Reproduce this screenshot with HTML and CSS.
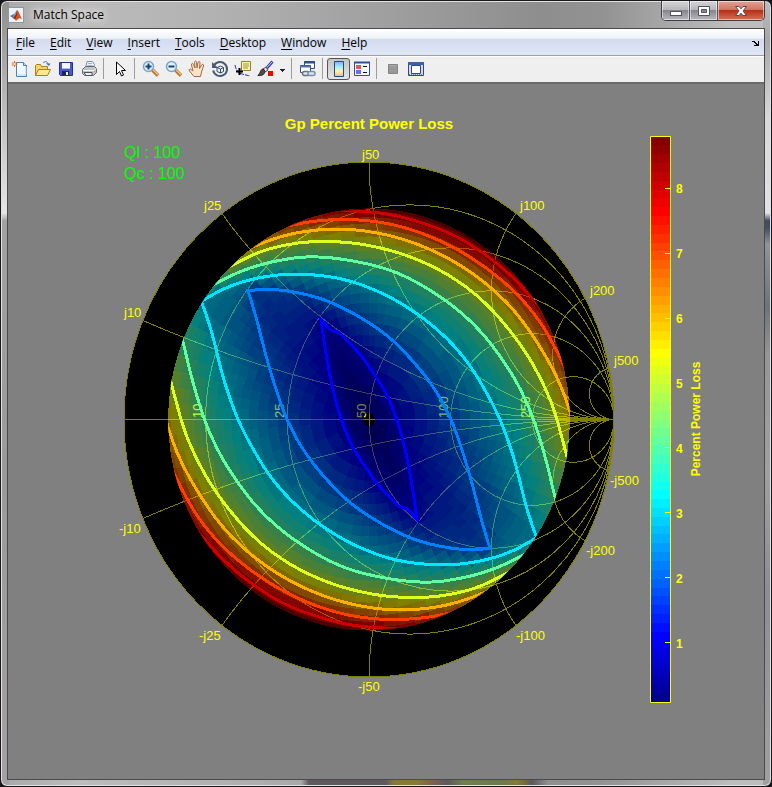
FILE: index.html
```html
<!DOCTYPE html>
<html lang="en">
<head>
<meta charset="utf-8">
<title>Match Space</title>
<link rel="stylesheet" href="styles.css">
</head>
<body>
<div class="window">
  <header class="titlebar">
    <svg class="app-icon" viewBox="0 0 16 16" aria-hidden="true">
      <rect x=".5" y=".5" width="15" height="15" fill="#eef2f6" stroke="#8d98a5"/>
      <path d="M2 9l4-2 2 1-3 3z" fill="#3c78b4"/>
      <path d="M6 7l3-4-2 6-2 2z" fill="#6aa0c8"/>
      <path d="M9 3c1 0 2 3 5 9-2-1-3-1-4 0l-2 2c-1-2-2-2-3-3 2-1 3-4 4-8z" fill="#d8501c"/>
      <path d="M9 3c-.5 4-1.500 6-4 8l2 1c2-3 2.500-6 2-9z" fill="#8f2414"/>
    </svg>
    <h1 class="title">Match Space</h1>
    <div class="controls">
      <button class="control" aria-label="Minimize"><svg width="14" height="12" viewBox="0 0 14 12"><rect x="1.500" y="6.500" width="11" height="4" fill="#fff" stroke="#52525e"/></svg></button>
      <button class="control" aria-label="Maximize"><svg width="14" height="12" viewBox="0 0 14 12"><path d="M1.500 1.500h11v9h-11zM4.500 4.500v3h5v-3z" fill="#fff" fill-rule="evenodd" stroke="#52525e"/></svg></button>
      <button class="control close" aria-label="Close"><svg width="14" height="12" viewBox="0 0 14 12"><path d="M1.500 1.500h3.500l2 2.300 2-2.300h3.500L9 6l3.500 4.500H9L7 8.200 5 10.500H1.500L5 6z" fill="#fff" stroke="#5a4650"/></svg></button>
    </div>
  </header>

  <main class="client">
    <nav class="menubar" aria-label="Menu">
      <button class="menu"><u>F</u>ile</button>
      <button class="menu"><u>E</u>dit</button>
      <button class="menu"><u>V</u>iew</button>
      <button class="menu"><u>I</u>nsert</button>
      <button class="menu"><u>T</u>ools</button>
      <button class="menu"><u>D</u>esktop</button>
      <button class="menu"><u>W</u>indow</button>
      <button class="menu"><u>H</u>elp</button>
      <button class="dock" aria-label="Dock figure"><svg width="8" height="7" viewBox="0 0 8 7"><path d="M0 1h3v1h1v1h1v1h1V1h1v5H2V5h2V4H3V3H2V2H0z" fill="#000"/></svg></button>
    </nav>

    <div class="toolbar" role="toolbar" aria-label="Figure tools">
      <button class="tool" aria-label="New figure"><svg viewBox="0 0 18 18">
        <path d="M5.500 2.500h7l3 3v11h-10z" fill="#f2f8ff" stroke="#4c7fb8"/><path d="M12.500 2.500v3h3" fill="#bcd6f0" stroke="#4c7fb8"/><path d="M7 15h8V7" fill="none" stroke="#b5d3f2"/>
        <path d="M3.500 1v6M.5 4h6M1.500 2l4 4M5.500 2l-4 4" stroke="#d9683a"/><circle cx="3.500" cy="4" r="1.200" fill="#ffe08a"/></svg></button>
      <button class="tool" aria-label="Open file"><svg viewBox="0 0 18 18">
        <path d="M1.500 15.500v-10l1-1h4l1 2h6v3" fill="#f3d36a" stroke="#a8811c"/><path d="M1.500 15.500l3-6h12l-3 6z" fill="#ffe98e" stroke="#a8811c"/><path d="M9 3c2-2 4-2 5 1" fill="none" stroke="#4472ae"/><path d="M12 3.500h4.500L15 6z" fill="#4472ae"/></svg></button>
      <button class="tool" aria-label="Save figure"><svg viewBox="0 0 18 18">
        <path d="M2.500 2.500h13v13h-12l-1-1z" fill="#4b58c8" stroke="#25308a"/><path d="M5 3h8v6H5z" fill="#f6f8ff"/><path d="M5 8h8v1H5z" fill="#a9bff0"/><path d="M5 11h7v4H5z" fill="#20264e"/><path d="M9 12h2v3H9z" fill="#f0f2ff"/></svg></button>
      <button class="tool" aria-label="Print figure"><svg viewBox="0 0 18 18">
        <path d="M7 1.500h5.500l2 3-1 4h-8z" fill="#eaf2ff" stroke="#7d91b2"/><path d="M8 3.500h4M7.500 5.500h5" stroke="#9fb4d8"/><path d="M2.500 9.500l3-3h9l2 2v4l-3 3h-9l-2-2z" fill="#bfc3c9" stroke="#676b72"/><path d="M3 10.500h11l2-2" fill="none" stroke="#f5f5f5"/><path d="M4 12.500h8v3H6z" fill="#eee" stroke="#4f5258"/><path d="M14 11.500h1" stroke="#cfa31f"/></svg></button>
      <span class="separator"></span>
      <button class="tool" aria-label="Edit plot"><svg viewBox="0 0 18 18"><path d="M5.500 2v12.500l3-3 2 4.500 2-1-2-4.500h4z" fill="#fff" stroke="#000"/></svg></button>
      <span class="separator"></span>
      <button class="tool" aria-label="Zoom in"><svg viewBox="0 0 18 18"><path d="M10.500 10l5.500 5.500" stroke="#b66b24" stroke-width="3.500"/><path d="M11 9.800l5 5" stroke="#f4c478" stroke-width="1.500"/><circle cx="6.500" cy="6.500" r="5" fill="#dff4ff" stroke="#7ca4c6" stroke-width="1.500"/><path d="M3.500 6.500h6M6.500 3.500v6" stroke="#1b3f78" stroke-width="2"/></svg></button>
      <button class="tool" aria-label="Zoom out"><svg viewBox="0 0 18 18"><path d="M10.500 10l5.500 5.500" stroke="#b66b24" stroke-width="3.500"/><path d="M11 9.800l5 5" stroke="#f4c478" stroke-width="1.500"/><circle cx="6.500" cy="6.500" r="5" fill="#dff4ff" stroke="#7ca4c6" stroke-width="1.500"/><path d="M3.500 6.500h6" stroke="#1b3f78" stroke-width="2"/></svg></button>
      <button class="tool" aria-label="Pan"><svg viewBox="0 0 18 18"><path d="M6 16.500L1.500 11c-1-2 .5-2.500 1.500-1.500L5 11 3.500 5c-.2-2 1.500-2 2-.5L7 8l-.5-5.500c0-2 2-2 2 0L9 8l1-5.500c.5-1.700 2.200-1.200 2 .5L11.500 8.500l2-3.500c1-1.500 2.500-.5 2 1l-2 6-1 4.500z" fill="#ffe3c8" stroke="#9c6a45"/></svg></button>
      <button class="tool" aria-label="Rotate 3D"><svg viewBox="0 0 18 18"><path d="M3 5.500a7 7 0 1 1-.8 5" fill="none" stroke="#485a74" stroke-width="2"/><path d="M1 2v6h6z" fill="#485a74"/><path d="M6 7.500L9.500 6l3 1.500v4L9.500 13 6 11.500zM6 7.500L9.500 9l3-1.500M9.500 9v4" fill="#e8eef8" stroke="#3a4c68"/></svg></button>
      <button class="tool" aria-label="Data cursor"><svg viewBox="0 0 18 18"><path d="M1 5c1 5 3 8 7 9l8 2" fill="none" stroke="#2424ff" stroke-dasharray="4 1"/><path d="M7.500 1.500h9v9h-7l-2 2z" fill="#fcf7a8" stroke="#8a8432"/><path d="M9 4h6M9 6h6M9 8h5" stroke="#99914a"/><path d="M5.500 8v7M2 11.500h7" stroke="#000" stroke-width="2"/></svg></button>
      <button class="tool" aria-label="Brush data"><svg viewBox="0 0 18 18"><path d="M15.500 1.500L9 9" stroke="#3946a8" stroke-width="3"/><path d="M15 2L9 8.500" stroke="#b8c8ff"/><path d="M9 7L6 9l2 3 3-2z" fill="#ddd" stroke="#555"/><path d="M6.500 9C3 9 4 13 .8 15.500c4 .5 7-1 7-4z" fill="#4e4e4e" stroke="#222"/><path d="M11 11h5v5h-5z" fill="#f00"/></svg></button>
      <button class="drop" aria-label="Brush options"><svg width="5" height="3" viewBox="0 0 5 3"><path d="M0 0h5v1H4v1H3v1H2V2H1V1H0z" fill="#222"/></svg></button>
      <span class="separator"></span>
      <button class="tool" aria-label="Link plot"><svg viewBox="0 0 18 18"><path d="M5.500 1.500h10v7h-10z" fill="#fff" stroke="#2e4e86"/><path d="M5 2.500h11" stroke="#2e4e86" stroke-width="2"/><path d="M1.500 5.500h10v7h-10z" fill="#fff" stroke="#2e4e86"/><path d="M1 6.500h11" stroke="#4a72b0" stroke-width="2"/><rect x="3.500" y="11.500" width="7" height="4" rx="2" fill="#dce6f0" stroke="#60758c" stroke-width="1.500"/><rect x="9" y="11.500" width="7" height="4" rx="2" fill="#dce6f0" stroke="#7890a8" stroke-width="1.500"/></svg></button>
      <span class="separator"></span>
      <button class="tool pressed" aria-label="Insert colorbar" aria-pressed="true"><svg viewBox="0 0 18 18"><defs><linearGradient id="cb" x2="0" y2="1"><stop stop-color="#8aa8ff"/><stop offset=".35" stop-color="#9cf0ff"/><stop offset=".65" stop-color="#fff2a0"/><stop offset="1" stop-color="#ffb08c"/></linearGradient></defs><path d="M4.500 1.500h9v15h-9z" fill="url(#cb)" stroke="#244a86"/></svg></button>
      <button class="tool" aria-label="Insert legend"><svg viewBox="0 0 18 18"><path d="M1.500 2.500h15v13h-15z" fill="#f8faff" stroke="#2e5090"/><path d="M1 2.500h16" stroke="#2e5090" stroke-width="2"/><path d="M3 5h5v4H3z" fill="#e45757"/><path d="M3 10h5v4H3z" fill="#6a6cf0"/><path d="M10 6.500h4M10 12.500h4" stroke="#111"/></svg></button>
      <span class="separator"></span>
      <button class="tool" aria-label="Hide plot tools"><svg viewBox="0 0 18 18"><path d="M4.500 4.500h9v9h-9z" fill="#999" stroke="#848484"/><path d="M5 5.500h8" stroke="#aaa"/></svg></button>
      <button class="tool" aria-label="Show plot tools"><svg viewBox="0 0 18 18"><path d="M1.500 2.500h15v13h-15z" fill="#d6dbe6" stroke="#2b4887"/><path d="M1 3.500h16" stroke="#3e62a7" stroke-width="3"/><path d="M4.500 5.500h9v8h-9z" fill="#fff" stroke="#2b4887"/><path d="M2 14.500h14" stroke="#7184a8" stroke-dasharray="1 1"/></svg></button>
    </div>

    <svg class="figure" viewBox="8 84 756 695" role="img" aria-label="Gp Percent Power Loss">
      <defs>
        <clipPath id="smith"><ellipse cx="369" cy="419.500" rx="245" ry="257.500"/></clipPath>
        <clipPath id="data"><ellipse cx="369" cy="419.500" rx="201" ry="210"/></clipPath>
      </defs>
      <ellipse cx="369" cy="419.500" rx="245" ry="257.500" fill="#000"/>
      <g id="grid" class="grid" clip-path="url(#smith)"></g>
      <ellipse class="grid" cx="369" cy="419.500" rx="245" ry="257.500"/>
      <g class="label">
        <text transform="translate(202 418) rotate(-90)">10</text>
        <text transform="translate(284 418) rotate(-90)">25</text>
        <text transform="translate(366 418) rotate(-90)">50</text>
        <text transform="translate(448 418) rotate(-90)">100</text>
        <text transform="translate(530 418) rotate(-90)">250</text>
      </g>
      <g id="surface" class="surface"></g>
      <g id="contours" class="contours" clip-path="url(#data)"></g>
      <g class="label">
        <text x="362" y="159">j50</text>
        <text x="520" y="210">j100</text>
        <text x="590" y="295">j200</text>
        <text x="614" y="365">j500</text>
        <text x="204" y="210">j25</text>
        <text x="124" y="317">j10</text>
        <text x="119" y="533">-j10</text>
        <text x="199" y="640">-j25</text>
        <text x="358" y="691">-j50</text>
        <text x="516" y="640">-j100</text>
        <text x="586" y="555">-j200</text>
        <text x="610" y="485">-j500</text>
      </g>
      <text class="heading" x="369" y="129" text-anchor="middle">Gp Percent Power Loss</text>
      <g class="quality">
        <text x="124" y="158">Ql : 100</text>
        <text x="124" y="179">Qc : 100</text>
      </g>
      <g id="colorbar" class="bands"></g>
      <path class="axis" d="M650.500 136.500h20v566h-20zM665 188.500h5M665 253.500h5M665 318.500h5M665 383.500h5M665 447.500h5M665 512.500h5M665 577.500h5M665 642.500h5"/>
      <g class="ticks">
        <text x="676" y="193">8</text>
        <text x="676" y="258">7</text>
        <text x="676" y="323">6</text>
        <text x="676" y="388">5</text>
        <text x="676" y="453">4</text>
        <text x="676" y="518">3</text>
        <text x="676" y="583">2</text>
        <text x="676" y="648">1</text>
        <text transform="translate(700 419) rotate(-90)" text-anchor="middle">Percent Power Loss</text>
      </g>
    </svg>
  </main>
</div>
<script src="chart.js"></script>
</body>
</html>
```
FILE: styles.css
```css
* { box-sizing: border-box; }

body {
  margin: 0;
  background: #15151a;
  font-family: "Open Sans", "Noto Sans", sans-serif;
  font-size: 12px;
  color: #000;
}

.window {
  min-height: 100vh;
  display: flex;
  flex-direction: column;
  padding: 0 6px 6px;
  border: 1px solid #18181c;
  border-radius: 7px;
  box-shadow: inset 0 0 0 1px #e2e2e2;
  background:
    linear-gradient(90deg, transparent 39%, #5d595c 40%, #5d595c 50%, #887a36 51%, #887a36 54%, #806050 56%, #5d595c 58%, #70804c 60%, #6b7a4c 65%, #887a36 67%, #5d595c 69%, transparent 71%) bottom / 100% 7px no-repeat,
    linear-gradient(#bcbcbc, #a8a8a8 5%, #d8d8d8 15%, #e0e2e6 27%, #3d4a5c 28%, #465365 29%, #8f9499 31%, #6d7479 39%, #959595 45%, #a0a0a0 60%, #8f8c94 75%, #a0a0a0) right / 8px 100% no-repeat,
    linear-gradient(#8e8e8e, #b0b0b0 10%, #e6e6e6 27%, #a2a2a2 28%, #999 60%, #a5a0a3) left / 8px 100% no-repeat,
    linear-gradient(90deg, #a8a8a8, #bcbcbc 10%, #b0b0b0 30%, #8e8e8e 70%, #929292 78%, #bdbdbd 95%);
}

.titlebar {
  display: flex;
  align-items: center;
  gap: 9px;
  height: 27px;
  padding-left: 1px;
}

.app-icon {
  width: 16px;
  height: 16px;
}

.title {
  flex: 1;
  margin: 0;
  font-size: 12px;
  font-weight: 400;
  line-height: 16px;
  text-shadow: 0 0 8px #fff, 0 0 10px #fff;
}

.controls {
  align-self: flex-start;
  display: flex;
  height: 20px;
  border: 1px solid #3f3f45;
  border-top: 0;
  border-radius: 0 0 5px 5px;
  overflow: hidden;
}

.control {
  width: 28px;
  padding: 0;
  border: 0;
  border-right: 1px solid #55555c;
  background: linear-gradient(#d6d6d8, #b8b8bc 45%, #85858b 50%, #b9b9be);
  box-shadow: inset 0 0 0 1px rgba(255, 255, 255, .5);
}

.control svg {
  display: block;
  margin: 0 auto;
}

.close {
  width: 46px;
  border-right: 0;
  background: linear-gradient(#e3a596, #d07560 45%, #b52f19 50%, #d0654a 90%);
}

.client {
  flex: 1;
  display: flex;
  flex-direction: column;
  border: 1px solid #4a4a4e;
  background: #808080;
}

.menubar {
  display: flex;
  align-items: center;
  height: 27px;
  padding: 2px 0 0 1px;
  border-bottom: 1px solid #a0a0a0;
  background: linear-gradient(#fff, #eef2f8 36%, #d4dbed 38%, #dfe6f6);
}

.menu {
  padding: 0 8px 0 7px;
  border: 0;
  background: none;
  font: inherit;
  line-height: 18px;
}

.menu u { text-underline-offset: 2px; }

.dock {
  margin-left: auto;
  padding: 0 4px;
  border: 0;
  background: none;
  line-height: 8px;
}

.toolbar {
  display: flex;
  align-items: center;
  height: 28px;
  padding-bottom: 2px;
  border-top: 1px solid #fff;
  border-bottom: 2px solid #6a6a6a;
  background: #efefef;
}

.tool {
  display: grid;
  place-items: center;
  width: 23px;
  height: 23px;
  padding: 0;
  border: 1px solid transparent;
  border-radius: 3px;
  background: none;
}

.tool svg {
  width: 18px;
  height: 18px;
}

.pressed {
  height: 22px;
  border-color: #555;
  background: linear-gradient(#c4c4c4, #e4e4e4);
}

.drop {
  width: 11px;
  padding: 0;
  border: 0;
  background: none;
  line-height: 3px;
}

.separator {
  width: 1px;
  height: 21px;
  margin: 0 4px 0 3px;
  background: #9c9c9c;
}

.figure {
  display: block;
  width: 100%;
  font-family: "Liberation Sans", Arial, sans-serif;
}

.grid {
  fill: none;
  stroke: #808000;
  stroke-width: 1;
  shape-rendering: crispEdges;
}

.surface {
  opacity: .5;
  shape-rendering: crispEdges;
}

.contours {
  fill: none;
  stroke-width: 3;
  shape-rendering: crispEdges;
}

.bands { shape-rendering: crispEdges; }

.axis {
  fill: none;
  stroke: #ff0;
}

.label { fill: #ff0; font-size: 13px; }
.heading { fill: #ff0; font-size: 15px; font-weight: 700; }
.quality { fill: #0f0; font-size: 16px; }
.ticks { fill: #ff0; font-size: 12px; font-weight: 700; }
```
FILE: chart.js
```js
const NS = "http://www.w3.org/2000/svg";
const CX = 369, CY = 419.5, RX = 245, RY = 257.5;
const DATA_RADIUS = 0.82, MIN = 0.075, MAX = 8.8;

function add(parent, name, attrs) {
  const el = document.createElementNS(NS, name);
  for (const key in attrs) el.setAttribute(key, attrs[key]);
  document.getElementById(parent).appendChild(el);
}

// 64-step jet colour map
function jet(value) {
  const i = Math.max(0, Math.min(63, Math.floor((value - MIN) / (MAX - MIN) * 64)));
  const t = (i + 1) / 64;
  const ramp = c => Math.round(255 * Math.max(0, Math.min(1, 1.5 - Math.abs(4 * t - c))));
  return `rgb(${ramp(3)},${ramp(2)},${ramp(1)})`;
}

// Constant resistance and reactance circles
for (const r of [0.2, 0.5, 1, 2, 5]) {
  add("grid", "ellipse", { cx: CX + RX * r / (1 + r), cy: CY, rx: RX / (1 + r), ry: RY / (1 + r) });
}
for (const x of [0.2, 0.5, 1, 2, 4, 10]) {
  for (const s of [-1, 1]) {
    add("grid", "ellipse", { cx: CX + RX, cy: CY + s * RY / x, rx: RX / x, ry: RY / x });
  }
}
add("grid", "path", { d: `M${CX - RX} ${CY}H${CX + RX}` });

// One side of each loss contour, relative to the centre; the other side is its half-turn
const contours = [
  { color: "#0000ff", passes: 1, side: [[-48,-100],[-44,-72],[-37,-34],[-28,-1],[-16,28],[1,54],[8,64],[31,88],[36,88],[41,92],[48,100]] },
  { color: "#0080ff", passes: 10, side: [[-121,-129],[-112,-99],[-100,-53],[-82,0],[-59,40],[-25,78],[2,98],[31,114],[58,124],[91,130],[108,130],[121,129]] },
  { color: "#00e8ff", passes: 14, side: [[-168,-119],[-161,-100],[-153,-71],[-146,-42],[-132,-2],[-119,24],[-101,54],[-79,80],[-52,103],[-20,123],[20,139],[58,145],[88,145],[114,141],[141,133],[168,118]] },
  { color: "#60ffa0", passes: 14, side: [[-200,-130],[-186,-78],[-179,-48],[-169,-13],[-162,7],[-149,35],[-132,62],[-108,92],[-74,121],[-28,147],[18,159],[58,163],[91,159],[124,150],[154,136],[180,121],[200,108]] },
  { color: "#dfff20", passes: 14, side: [[-212,-98],[-204,-60],[-198,-37],[-192,-15],[-184,13],[-169,46],[-150,77],[-118,115],[-82,143],[-38,164],[11,176],[58,178],[91,173],[114,166],[137,154],[160,142],[185,126],[212,104]] },
  { color: "#ffaf00", passes: 14, side: [[-225,-100],[-214,-45],[-208,-18],[-201,8],[-190,38],[-172,71],[-146,108],[-112,140],[-74,164],[-32,181],[15,190],[58,189],[88,183],[113,174],[140,162],[170,145],[225,100]] },
  { color: "#ff4000", passes: 14, side: [[-232,-100],[-216,0],[-206,30],[-192,60],[-176,90],[-156,117],[-126,145],[-92,168],[-59,184],[-24,195],[14,200],[50,199],[79,194],[110,186],[150,170],[235,103]] },
  { color: "#cf0000", passes: 14, side: [[-240,-105],[-218,30],[-190,88],[-167,117],[-142,144],[-116,165],[-86,184],[-52,197],[-22,205],[4,208],[28,209],[70,207],[120,198],[190,168],[240,107]] }
];

function spline(points) {
  const out = [];
  for (let i = 0; i < points.length - 1; i++) {
    const a = points[Math.max(0, i - 1)], b = points[i], c = points[i + 1];
    const d = points[Math.min(points.length - 1, i + 2)];
    const steps = Math.max(1, Math.round(Math.hypot(c[0] - b[0], c[1] - b[1]) / 4));
    for (let s = 0; s < steps; s++) {
      const t = s / steps;
      out.push([0, 1].map(k => 0.5 * (2 * b[k] + (c[k] - a[k]) * t
        + (2 * a[k] - 5 * b[k] + 4 * c[k] - d[k]) * t * t
        + (3 * b[k] - a[k] - 3 * c[k] + d[k]) * t * t * t)));
    }
  }
  out.push(points[points.length - 1]);
  return out;
}

function relax(points, passes) {
  for (let n = 0; n < passes; n++) {
    points = points.map((p, i) => i === 0 || i === points.length - 1 ? p
      : [0, 1].map(k => (points[i - 1][k] + 2 * p[k] + points[i + 1][k]) / 4));
  }
  return points;
}

const loops = contours.map(({ side, passes }) => {
  const half = relax(spline(side), passes);
  return half.concat(half.map(([x, y]) => [-x, -y]));
});

function crossing(loop, ux, uy) {
  for (let i = 0; i < loop.length; i++) {
    const a = loop[i], b = loop[(i + 1) % loop.length];
    const ca = a[0] * uy - a[1] * ux, cb = b[0] * uy - b[1] * ux;
    if (ca * cb > 0 || ca === cb) continue;
    const t = ca / (ca - cb);
    const r = (a[0] + t * (b[0] - a[0])) * ux + (a[1] + t * (b[1] - a[1])) * uy;
    if (r > 0) return r;
  }
  return 1;
}

function lossAt(crossings, r) {
  let r0 = 0, v0 = 0.1;
  for (let k = 0; k < crossings.length; k++) {
    if (r < crossings[k]) return v0 + (k + 1 - v0) * (r - r0) / (crossings[k] - r0);
    r0 = crossings[k];
    v0 = k + 1;
  }
  return 8 + (r - r0) / 9;
}

// Polar patches of the loss surface
const SECTORS = 80;
const rings = [0.025];
while (rings[rings.length - 1] < DATA_RADIUS) {
  const r = rings[rings.length - 1];
  rings.push(Math.min(DATA_RADIUS, r + 0.058 - 0.045 * r));
}
for (let s = 0; s < SECTORS; s++) {
  const a0 = s * 2 * Math.PI / SECTORS, a1 = (s + 1) * 2 * Math.PI / SECTORS, am = (a0 + a1) / 2;
  const dx = RX * Math.cos(am), dy = RY * Math.sin(am), len = Math.hypot(dx, dy);
  const crossings = loops.map(loop => crossing(loop, dx / len, dy / len));
  for (let i = 0; i < rings.length - 1; i++) {
    const p = (r, a) => `${(CX + RX * r * Math.cos(a)).toFixed(2)} ${(CY + RY * r * Math.sin(a)).toFixed(2)}`;
    const r0 = rings[i], r1 = rings[i + 1];
    add("surface", "path", {
      d: `M${p(r0, a0)}L${p(r1, a0)}L${p(r1, a1)}L${p(r0, a1)}Z`,
      fill: jet(lossAt(crossings, len * (r0 + r1) / 2))
    });
  }
}

loops.forEach((loop, k) => {
  const d = "M" + loop.map(([x, y]) => `${(CX + x).toFixed(1)} ${(CY + y).toFixed(1)}`).join("L") + "Z";
  add("contours", "path", { d, stroke: contours[k].color });
});

const band = 566 / 64;
for (let i = 0; i < 64; i++) {
  add("colorbar", "rect", {
    x: 650, y: 702.5 - (i + 1) * band, width: 20, height: band,
    fill: jet(MIN + (i + 0.5) * (MAX - MIN) / 64)
  });
}
```
